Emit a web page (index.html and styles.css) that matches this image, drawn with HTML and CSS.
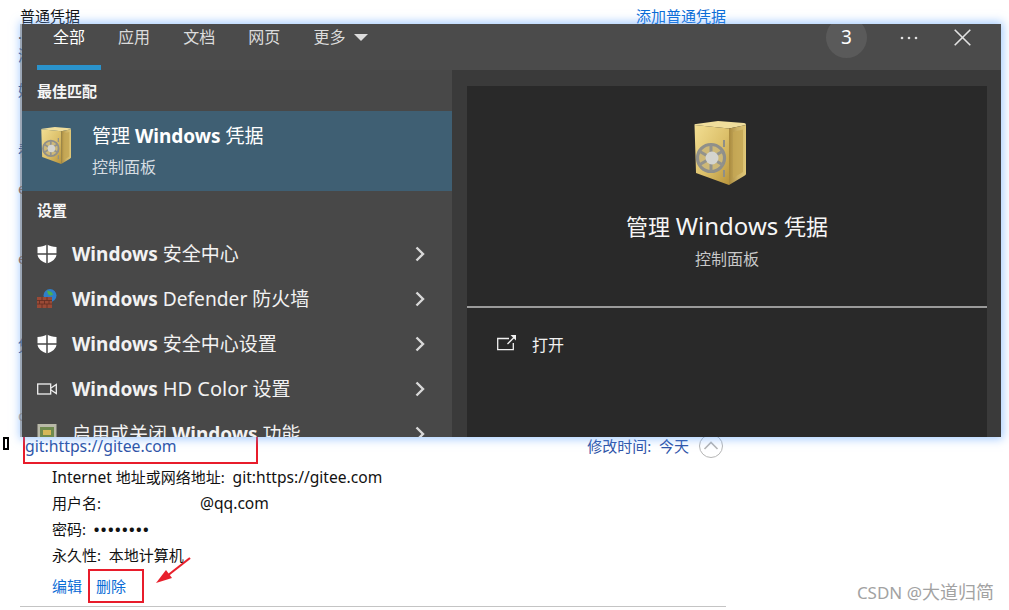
FILE: index.html
```html
<!DOCTYPE html>
<html lang="zh-CN">
<head>
<meta charset="utf-8">
<title>管理 Windows 凭据</title>
<link rel="stylesheet" href="styles.css">
</head>
<body>
<svg class="defs" width="0" height="0" aria-hidden="true">
  <defs>
    <linearGradient id="gold" x1="0" y1="0" x2="1" y2="1">
      <stop offset="0" stop-color="#f2de92"/><stop offset=".55" stop-color="#dcc06a"/><stop offset="1" stop-color="#b8943c"/>
    </linearGradient>
    <linearGradient id="goldside" x1="0" y1="0" x2="1" y2="0">
      <stop offset="0" stop-color="#a98a3e"/><stop offset=".5" stop-color="#cdb265"/><stop offset="1" stop-color="#e0c878"/>
    </linearGradient>
    <symbol id="safe" viewBox="13 11 52 64">
      <path d="M13.500 15 Q13 14 15 14 L37 11 63 13 Q65 13 65 15 L48 18.500Z" fill="#f0de9c"/>
      <path d="M13.500 15 48 18.500V75L15 63Z" fill="url(#gold)"/>
      <path d="M48 18.500 65 15V64Q65 65 63 66L48 75Z" fill="url(#goldside)"/>
      <path d="M52 22 62 19.500V62L52 68Z" fill="#c4a654" opacity=".8"/>
      <circle cx="30" cy="48" r="13.500" fill="#cdb878" stroke="#8f8f8a" stroke-width="3.200"/>
      <path d="M30 34.500V61.500M18 41 42 55M42 41 18 55" stroke="#92928c" stroke-width="3"/>
      <circle cx="31" cy="48" r="6.500" fill="#d4d4cf"/>
      <path d="M42 30h2v7h-2zM42 60h2v7h-2z" fill="#8f8f88"/>
    </symbol>
    <symbol id="shield" viewBox="0 0 20 20">
      <path d="M10 0.500C7.500 2 4 3 0.500 3V10C.5 14.500 5 18 10 19.500 15 18 19.500 14.500 19.500 10V3C16 3 12.500 2 10 .5Z" fill="#fff"/>
      <path d="M10 0V20M0 10H20" stroke="#484848" stroke-width="1.500"/>
    </symbol>
    <symbol id="chevron" viewBox="0 0 10 16">
      <path d="M1.500 1.500 8 8 1.500 14.500" fill="none" stroke="#d8d8d8" stroke-width="2.400"/>
    </symbol>
  </defs>
</svg>

<main class="sheet">
  <div class="sheet-head">
    <span>普通凭据</span>
    <a class="link">添加普通凭据</a>
  </div>
  <div class="peek-rows">
    <span class="peek-dark">·</span>
    <span>添</span>
    <span>好</span>
    <span>看</span>
    <span class="peek-brown">e</span>
    <span class="peek-brown">e</span>
    <span>凭</span>
    <span class="peek-faint">o</span>
  </div>
  <div class="cred-head">
    <i class="marker"></i>
    <div class="cred-name">git:https://gitee.com</div>
    <div class="cred-time">修改时间:&nbsp; 今天</div>
    <svg class="collapse" width="24" height="24" viewBox="0 0 24 24">
      <circle cx="12" cy="12" r="11.500" fill="#fff" stroke="#b5b5b5"/>
      <path d="M5.500 15 12 8.500 18.500 15" fill="none" stroke="#b5b5b5" stroke-width="1.600"/>
    </svg>
  </div>
  <div class="cred-details">
    <div><span class="lat">Internet</span> 地址或网络地址:&nbsp; <span class="lat">git:https://gitee.com</span></div>
    <div class="user-row"><span class="user-label">用户名:</span><span class="lat">@qq.com</span></div>
    <div>密码:&nbsp; <span class="secret">••••••••</span></div>
    <div>永久性:&nbsp; 本地计算机</div>
  </div>
  <div class="cred-actions">
    <a class="link">编辑</a>
    <a class="link delete">删除</a>
  </div>
  <hr class="rule">
</main>

<svg class="arrow" width="40" height="32" viewBox="0 0 40 32">
  <path d="M36 2 13 20" stroke="#e8202c" stroke-width="2.200" fill="none"/>
  <path d="M2 27 12 14 18 22Z" fill="#e8202c"/>
</svg>

<div class="watermark"><span class="wm-lat">CSDN @</span>大道归简</div>

<section class="search">
  <header class="search-top">
    <nav class="tabs">
      <span class="tab active">全部</span>
      <span class="tab">应用</span>
      <span class="tab">文档</span>
      <span class="tab">网页</span>
      <span class="tab">更多<i class="caret"></i></span>
    </nav>
    <div class="top-tools">
      <span class="badge">3</span>
      <svg class="dots" width="18" height="4" viewBox="0 0 18 4">
        <circle cx="2" cy="2" r="1.300"/><circle cx="9" cy="2" r="1.300"/><circle cx="16" cy="2" r="1.300"/>
      </svg>
      <svg class="close" width="17" height="17" viewBox="0 0 17 17">
        <path d="M.7.7 16.300 16.300M16.300.7.7 16.300" stroke="#e2e2e2" stroke-width="1.600" fill="none"/>
      </svg>
    </div>
  </header>
  <div class="search-body">
    <div class="results">
      <div class="label label-best">最佳匹配</div>
      <div class="best">
        <svg class="best-icon" width="30" height="37"><use href="#safe"/></svg>
        <div class="best-text">
          <div class="best-title">管理 <b>Windows</b> 凭据</div>
          <div class="best-sub">控制面板</div>
        </div>
      </div>
      <div class="label label-settings">设置</div>
      <div class="item">
        <svg class="item-icon" width="20" height="20"><use href="#shield"/></svg>
        <span class="item-text"><b>Windows</b> 安全中心</span>
        <svg class="chev" width="10" height="16"><use href="#chevron"/></svg>
      </div>
      <div class="item">
        <svg class="item-icon" width="20" height="20" viewBox="0 0 20 20">
          <circle cx="13" cy="6.500" r="6.500" fill="#2f7fc8"/>
          <path d="M10 1.500c2 0 5 1 6 4-1.500 1.500-4 1-5-.5z" fill="#4caf50"/>
          <path d="M0 8h15v11H0z" fill="#9a4a36"/>
          <path d="M0 11.500h15M0 15h15M5 8v3.500M10 8v3.500M2.500 11.500v3.500M7.500 11.500v3.500M12 11.500v3.500M5 15v4M10 15v4" stroke="#5f2d22" stroke-width=".8"/>
        </svg>
        <span class="item-text"><b>Windows</b> <span class="defender">Defender</span> 防火墙</span>
        <svg class="chev" width="10" height="16"><use href="#chevron"/></svg>
      </div>
      <div class="item">
        <svg class="item-icon" width="20" height="20"><use href="#shield"/></svg>
        <span class="item-text"><b>Windows</b> 安全中心设置</span>
        <svg class="chev" width="10" height="16"><use href="#chevron"/></svg>
      </div>
      <div class="item">
        <svg class="item-icon" width="20" height="20" viewBox="0 0 20 20">
          <rect x=".7" y="5" width="13" height="10" fill="none" stroke="#f0f0f0" stroke-width="1.300"/>
          <path d="M14 9 19.300 5.500V14.500L14 11" fill="none" stroke="#f0f0f0" stroke-width="1.300"/>
        </svg>
        <span class="item-text"><b>Windows</b> <span class="wide">HD Color</span> 设置</span>
        <svg class="chev" width="10" height="16"><use href="#chevron"/></svg>
      </div>
      <div class="item">
        <svg class="item-icon" width="20" height="20" viewBox="0 0 20 20">
          <rect width="19" height="20" x=".5" fill="#b9b9a8"/>
          <rect x="3" y="3" width="14" height="10" fill="#6f8a4e"/>
          <rect x="6" y="6" width="8" height="5" fill="#d6b858"/>
        </svg>
        <span class="item-text">启用或关闭 <b>Windows</b> 功能</span>
        <svg class="chev" width="10" height="16"><use href="#chevron"/></svg>
      </div>
    </div>
    <aside class="preview">
      <div class="preview-card">
        <div class="preview-hero">
          <svg class="hero-icon" width="52" height="64"><use href="#safe"/></svg>
          <div class="hero-title">管理 <span class="hero-lat">Windows</span> 凭据</div>
          <div class="hero-sub">控制面板</div>
        </div>
        <div class="open-row">
          <svg class="open-icon" width="19" height="16" viewBox="0 0 19 16">
            <path d="M12 3.500H.7V14.700H16.300V8" fill="none" stroke="#f0f0f0" stroke-width="1.300"/>
            <path d="M10.500 9 17 2.500" stroke="#f0f0f0" stroke-width="1.300"/>
            <path d="M13.500 0H19V5.500Z" fill="#f0f0f0"/>
          </svg>
          <span>打开</span>
        </div>
      </div>
    </aside>
  </div>
</section>
</body>
</html>
```

FILE: styles.css
```css
* { box-sizing: border-box; }
html, body { margin: 0; padding: 0; }
body {
  position: relative;
  width: 1009px;
  height: 610px;
  overflow: hidden;
  background: #fff;
  color: #111;
  font: 15px/20px "Noto Sans", "Noto Sans CJK SC", sans-serif;
}
.defs { position: absolute; }
.link { color: #0a6cd6; }
.lat { font-size: 15.600px; }

/* page underneath */
.sheet { width: 726px; padding-left: 3px; }
.sheet-head {
  display: flex;
  justify-content: space-between;
  height: 26px;
  padding: 6px 0 0 17px;
}
.peek-rows {
  display: grid;
  height: 409px;
  padding: 2px 0 0 15px;
  grid-template-rows: 18px 35px 60px 38px 70px 87px 70px 29px;
  line-height: 18px;
  color: #2b4f8f;
}
.peek-dark { color: #333; }
.peek-brown { color: #a0623a; }
.peek-faint { color: #b9a58f; }

.cred-head { display: flex; align-items: flex-start; height: 30px; padding-right: 3px; }
.marker {
  width: 6px;
  height: 13px;
  margin: 2px 14px 0 0;
  border: 2px solid #000;
}
.cred-name {
  width: 235px;
  height: 29px;
  border: 2px solid #e81c2b;
  color: #2f55a8;
  font-size: 15.800px;
  line-height: 18px;
}
.cred-time { margin-left: auto; line-height: 22px; color: #2f55a8; }
.collapse { margin: -1px 0 0 10px; }

.cred-details { padding-left: 49px; line-height: 26px; margin-top: -1px; }
.user-row { display: flex; }
.user-label { width: 148px; }
.secret { font-weight: 700; letter-spacing: 1.400px; }

.cred-actions { display: flex; align-items: center; height: 34px; margin: 1px 0 0 49px; }
.delete {
  display: flex;
  align-items: center;
  width: 56px;
  height: 34px;
  margin-left: 6px;
  padding-left: 6px;
  border: 2px solid #e81c2b;
}
.rule { height: 1px; margin: 3px 0 0 17px; border: 0; background: #c4c4c4; }

.arrow { position: absolute; left: 154px; top: 556px; }
.watermark {
  position: absolute;
  right: 15px;
  top: 581px;
  font-size: 18px;
  line-height: 22px;
  color: #a2a2a2;
}
.wm-lat { font-size: 17px; }

/* search flyout laid over the page */
.search {
  position: absolute;
  left: 22px;
  top: 24px;
  width: 979px;
  height: 413px;
  overflow: hidden;
  display: flex;
  flex-direction: column;
  color: #f2f2f2;
  background: #484848;
  box-shadow: -2px 0 0 rgba(110, 110, 110, .5), 0 0 9px 2px rgba(90, 160, 255, .55);
}
.search-top {
  flex: none;
  display: flex;
  height: 46px;
  background: #4b4b4b;
}
.tabs { display: flex; gap: 1.100px; padding-left: 15px; }
.tab {
  display: flex;
  align-items: flex-start;
  height: 46px;
  padding: 0 16px;
  font-size: 16px;
  line-height: 26px;
  color: #dcdcdc;
}
.tab.active { color: #fff; border-bottom: 5px solid #2a93cc; }
.caret {
  width: 0;
  height: 0;
  margin: 10px 0 0 9px;
  border-left: 7px solid transparent;
  border-right: 7px solid transparent;
  border-top: 7px solid #dcdcdc;
}
.top-tools {
  margin-left: auto;
  display: flex;
  align-items: flex-start;
  padding-right: 30px;
}
.badge {
  width: 41px;
  height: 41px;
  margin-top: -7px;
  border-radius: 50%;
  background: #5a5a5a;
  font-size: 19px;
  line-height: 41px;
  text-align: center;
  color: #fff;
}
.dots { margin: 12px 0 0 33px; fill: #e2e2e2; }
.close { margin: 5px 0 0 36px; }

.search-body { flex: 1; display: flex; min-height: 0; }
.results { flex: none; width: 430px; background: #484848; }
.label {
  padding-left: 15px;
  font-size: 15px;
  font-weight: 700;
  color: #f6f6f6;
}
.label-best { height: 41px; line-height: 43px; }
.label-settings { height: 40px; line-height: 39px; }
.best {
  display: flex;
  align-items: flex-start;
  height: 80px;
  padding: 16px 0 0 19px;
  background: #3f5f73;
}
.best-text { margin: -4px 0 0 21px; }
.best-title { font-size: 19px; line-height: 26px; color: #fff; }
.best-sub { margin-top: 6px; font-size: 16px; line-height: 24px; color: #d6dde2; }
.item {
  display: flex;
  align-items: center;
  height: 45px;
  padding: 0 27px 0 15px;
}
.item-text { flex: 1; margin-left: 15px; font-size: 19px; white-space: nowrap; }
.wide { font-size: 20px; }
.defender { font-size: 19.200px; }
.preview { flex: 1; padding: 16px 14px 0 15px; background: #3a3a3a; }
.preview-card { height: 100%; background: #292929; }
.preview-hero {
  display: flex;
  flex-direction: column;
  align-items: center;
  height: 222px;
  padding-top: 35px;
  border-bottom: 2px solid #9a9a9a;
}
.hero-icon { margin-left: -14px; }
.hero-title { margin-top: 26px; font-size: 22px; line-height: 30px; color: #f6f6f6; }
.hero-lat { font-size: 24px; }
.hero-sub { margin-top: 7px; font-size: 16px; line-height: 22px; color: #c8c8c8; }
.open-row {
  display: flex;
  align-items: flex-start;
  gap: 16px;
  padding: 25px 0 0 30px;
  font-size: 16px;
  line-height: 24px;
  color: #f2f2f2;
}
.open-icon { margin-top: 2px; }
```
